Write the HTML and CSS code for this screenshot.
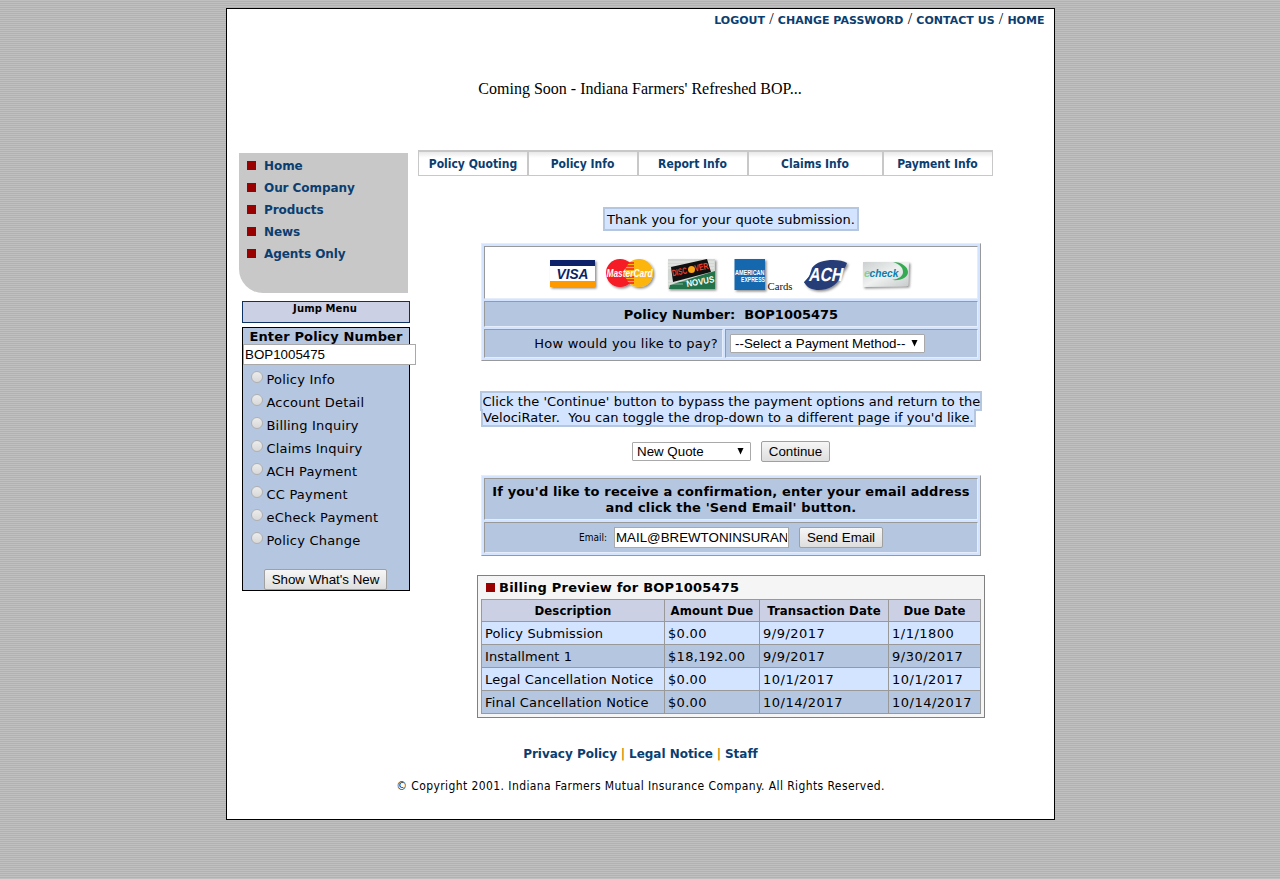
FILE: index.html
```html
<!DOCTYPE html>
<html lang="en">
<head>
<meta charset="utf-8">
<title>Indiana Farmers - Quote Submission</title>
<link rel="stylesheet" href="styles.css">
</head>
<body>
<div class="page">
  <div class="top-links"><a>LOGOUT</a><i>/</i><a>CHANGE PASSWORD</a><i>/</i><a>CONTACT US</a><i>/</i><a>HOME</a></div>
  <div class="banner">Coming Soon - Indiana Farmers' Refreshed BOP...</div>
  <div class="columns">
    <aside class="sidebar">
      <nav class="side-menu">
        <a><span>Home</span></a><a><span>Our Company</span></a><a><span>Products</span></a><a><span>News</span></a><a><span>Agents Only</span></a>
      </nav>
      <div class="jump">Jump Menu</div>
      <div class="policy-panel">
        <div class="panel-title">Enter Policy Number</div>
        <input class="policy-input" value="BOP1005475">
        <div class="radios">
          <label><input type="radio" name="p">Policy Info</label>
          <label><input type="radio" name="p">Account Detail</label>
          <label><input type="radio" name="p">Billing Inquiry</label>
          <label><input type="radio" name="p">Claims Inquiry</label>
          <label><input type="radio" name="p">ACH Payment</label>
          <label><input type="radio" name="p">CC Payment</label>
          <label><input type="radio" name="p">eCheck Payment</label>
          <label><input type="radio" name="p">Policy Change</label>
        </div>
        <button class="btn news-btn">Show What's New</button>
      </div>
    </aside>
    <main class="main">
      <nav class="tabs"><a>Policy Quoting</a><a>Policy Info</a><a>Report Info</a><a>Claims Info</a><a>Payment Info</a></nav>
      <div class="content">
        <div class="thanks">Thank you for your quote submission.</div>
        <section class="grid-box pay-box">
          <div class="cell logos">
            <svg width="370" height="42" viewBox="545 253 370 42">
              <defs>
                <filter id="sh" x="-20%" y="-20%" width="150%" height="150%"><feDropShadow dx="1.5" dy="1.5" stdDeviation="1" flood-opacity=".45"/></filter>
                <linearGradient id="ec" x1="0" y1="0" x2="1" y2="1"><stop offset="0" stop-color="#ccd0d0"/><stop offset=".5" stop-color="#eef1f0"/><stop offset="1" stop-color="#c7cbcb"/></linearGradient>
              </defs>
              <g filter="url(#sh)">
                <path fill="#fff" d="M550 260h45v27h-45z"/>
                <path fill="#0c2368" d="M550 260h45v6h-45z"/><path fill="#f90" d="M550 281h45v6h-45z"/>
              </g>
              <text x="556.5" y="278.5" textLength="32" lengthAdjust="spacingAndGlyphs" class="logo visa">VISA</text>
              <g filter="url(#sh)"><circle cx="620" cy="273" r="14" fill="#f51a25"/><circle cx="639" cy="273" r="14" fill="#fcb50f"/></g>
              <path stroke="#f51a25" stroke-width="1.5" d="M627 263h7M626 266h8M626 269h8M626 277h8M626 280h8M627 283h7"/>
              <text x="606.5" y="277" textLength="46" lengthAdjust="spacingAndGlyphs" class="logo mc">MasterCard</text>
              <g filter="url(#sh)"><path fill="#d3d7d3" d="M668 259h47v30h-47z"/><path fill="#247348" d="M669 289l1-4 45-14v18z"/></g>
              <path stroke="#fff" stroke-width=".7" opacity=".7" d="M668 262h46M668 265h46M668 268h46M668 281h20M668 284h15"/>
              <path fill="#101010" d="M671 267l36-8 4 13-38 10z"/>
              <g transform="rotate(-12 672 278)"><text x="673" y="276.500" textLength="15" lengthAdjust="spacingAndGlyphs" class="logo disc">DISC</text><text x="696" y="276.500" textLength="14" lengthAdjust="spacingAndGlyphs" class="logo disc">VER</text></g>
              <circle cx="691.500" cy="269.500" r="3.500" fill="#f9a51a"/>
              <g transform="rotate(-10 687 287)"><text x="687" y="287" textLength="28" lengthAdjust="spacingAndGlyphs" class="logo novus">NOVUS</text></g>
              <g filter="url(#sh)"><path fill="#1767ae" d="M734.5 259H765v31h-30.500z"/></g>
              <text x="735" y="274.5" textLength="29.500" lengthAdjust="spacingAndGlyphs" class="logo amex">AMERICAN</text>
              <text x="741" y="281.500" textLength="24" lengthAdjust="spacingAndGlyphs" class="logo amex">EXPRESS</text>
              <text x="767.500" y="289.500" textLength="25" lengthAdjust="spacingAndGlyphs" class="logo cards">Cards</text>
              <g filter="url(#sh)" fill="#273e78">
                <path d="M812 268c4-6 13-8 21-8 6 0 11 1 14 3-1 3-2 5-4 7l-3 8c-4 8-12 12-21 12-7 0-12-2-15-8l5-5z"/>
                <path d="M804 283l12-16h5l-1 16z"/>
              </g>
              <g transform="skewX(-12)"><text x="868" y="281.500" textLength="34" lengthAdjust="spacingAndGlyphs" class="logo ach">ACH</text></g>
              <g filter="url(#sh)"><path fill="url(#ec)" d="M863 262h46l-1 24-45 1z"/></g>
              <path fill="#35aa52" d="M893 262c9 0 15 5 15 10s-6 9-16 8c7-1 11-4 11-8 0-5-4-8-10-10z"/>
              <text x="864" y="276.500" class="logo ech">e</text>
              <text x="869.500" y="276.500" textLength="29" lengthAdjust="spacingAndGlyphs" class="logo check">check</text>
            </svg>
          </div>
          <div class="cell pol-num"><b>Policy Number:&nbsp; BOP1005475</b></div>
          <div class="pay-row">
            <div class="cell question">How would you like to pay?</div>
            <div class="cell answer"><div class="select pay-select"><span>--Select a Payment Method--</span><svg width="7" height="7"><path d="M.5 0h6l-3 6.500z"/></svg></div></div>
          </div>
        </section>
        <div class="note"><span class="note-a">Click the 'Continue' button to bypass the payment options and return to the</span><span class="note-b">VelociRater.&nbsp; You can toggle the drop-down to a different page if you'd like.</span></div>
        <div class="continue-row"><div class="select quote-select"><span>New Quote</span><svg width="7" height="7"><path d="M.5 0h6l-3 6.500z"/></svg></div><button class="btn continue">Continue</button></div>
        <section class="grid-box email-box">
          <div class="cell email-head"><b>If you'd like to receive a confirmation, enter your email address</b><b>and click the 'Send Email' button.</b></div>
          <div class="cell email-row"><span>Email:</span><input value="MAIL@BREWTONINSURANCE.COM"><button class="btn send">Send Email</button></div>
        </section>
        <section class="billing">
          <h2><span>Billing Preview for BOP1005475</span></h2>
          <table>
            <colgroup><col class="c1"><col class="c2"><col class="c3"><col class="c4"></colgroup>
            <tr><th>Description</th><th>Amount Due</th><th>Transaction Date</th><th>Due Date</th></tr>
            <tr><td>Policy Submission</td><td class="num">$0.00</td><td class="num">9/9/2017</td><td class="num">1/1/1800</td></tr>
            <tr class="alt"><td>Installment 1</td><td class="num">$18,192.00</td><td class="num">9/9/2017</td><td class="num">9/30/2017</td></tr>
            <tr><td>Legal Cancellation Notice</td><td class="num">$0.00</td><td class="num">10/1/2017</td><td class="num">10/1/2017</td></tr>
            <tr class="alt"><td>Final Cancellation Notice</td><td class="num">$0.00</td><td class="num">10/14/2017</td><td class="num">10/14/2017</td></tr>
          </table>
        </section>
      </div>
    </main>
  </div>
  <footer>
    <div class="foot-links"><a>Privacy Policy</a> <i>|</i> <a>Legal Notice</a> <i>|</i> <a>Staff</a></div>
    <div class="copyright">© Copyright 2001. Indiana Farmers Mutual Insurance Company. All Rights Reserved.</div>
  </footer>
</div>
</body>
</html>
```
FILE: styles.css
```css
* { box-sizing: border-box; }
html { height: 100%; }
body {
  margin: 0; padding: 8px 0 0 226px; min-height: 100%;
  font: 13px/16px Verdana, "DejaVu Sans", sans-serif; color: #000;
  background: repeating-linear-gradient(#c0c0c0 0 1px, #b2b2b2 1px 2px);
}
a { color: #0b3e70; font-weight: bold; }
i { font-style: normal; }
.page { width: 829px; height: 812px; background: #fff; border: 1px solid #000; overflow: hidden; }
.top-links { height: 22px; padding: 1px 9.500px 0 0; display: flex; justify-content: flex-end; align-items: baseline; font-size: 11px; line-height: 18px; letter-spacing: .02px; }
.top-links i { width: 12.800px; text-align: center; font: 16px "Liberation Serif", serif; }
.banner { height: 119px; padding: 49px 1px 0 0; text-align: center; font: 16px/18px "Liberation Serif", serif; }
.columns { display: flex; height: 585px; }
.sidebar { width: 191px; padding: 3px 0 0 12px; }
.side-menu { width: 169px; height: 140px; padding: 1px 0 0 8px; background: #c8c8c8; border-bottom-left-radius: 24px; font-size: 12px; line-height: 18px; }
.side-menu a { display: flex; align-items: center; gap: 8px; height: 22px; }
.side-menu a span { padding-top: 2px; letter-spacing: -.06px; }
.side-menu a::before { content: ""; width: 9px; height: 9px; background: #900; }
.jump { width: 168px; height: 22px; margin: 8px 0 4px 3px; padding-right: 2px; border: 1px solid #0d3261; background: #ccd0e4; text-align: center; font-weight: bold; font-size: 10px; line-height: 14px; letter-spacing: .1px; }
.policy-panel { width: 168px; height: 264px; margin-left: 3px; border: 1px solid #000; background: #b5c6e0; display: flex; flex-direction: column; }
.panel-title { text-align: center; font-weight: bold; white-space: nowrap; height: 16px; line-height: 17px; letter-spacing: .15px; }
input { font: 13.333px "Liberation Sans", sans-serif; border: 1px solid #a9a9a9; border-radius: 0; padding: 1px; margin: 0; color: #000; background: #fff; }
.policy-input { width: 173px; height: 21px; }
.radios { padding: 4px 0 0 8px; height: 204px; letter-spacing: .2px; }
.radios label { display: flex; height: 23px; gap: 3.500px; line-height: 21px; }
.radios input { appearance: none; width: 12px; height: 12px; margin: 2px 0 0; border: 1px solid #b0b0b0; border-radius: 50%; background: linear-gradient(#ececec, #d8d8d8); }
.btn { font: 13.333px "Liberation Sans", sans-serif; color: #000; height: 21px; padding: 0; white-space: nowrap; border: 1px solid #a0a0a0; border-radius: 2px; background: linear-gradient(#f6f6f6, #dedede); }
.news-btn { width: 123px; margin-left: 21px; flex: none; }
.main { width: 575px; }
.tabs { display: grid; grid-template-columns: 109px 110px 110px 135px 110px; height: 26px; border: solid #c8c8c8; border-width: 2px 1px 1px 0; background: linear-gradient(#e8e8e8, #fff 6px); }
.tabs a { border-left: 2px solid #c8c8c8; padding-right: 1px; text-align: center; font: bold 12px/24px Tahoma, "DejaVu Sans Condensed", sans-serif; }
.tabs a:first-child { border-left-width: 1px; padding: 0; }
.content { padding: 31px 0 0 59px; display: flex; flex-direction: column; align-items: flex-start; }
.thanks { height: 24px; width: 256px; margin-left: 126px; border: 2px solid #b5c6e0; background: #d2e4ff; text-align: center; line-height: 21px; white-space: nowrap; letter-spacing: .05px; }
.grid-box { width: 500px; margin-left: 4px; padding: 2px; background: #d2e4ff; border: 1px solid; border-color: #e4edf9 #999 #999 #e4edf9; display: flex; flex-direction: column; gap: 2px; }
.cell { background: #b5c6e0; border: 1px solid; border-color: #999 #e4edf9 #e4edf9 #999; }
.pay-box { margin-top: 12px; height: 118px; }
.logos { height: 53px; background: #fff; padding: 6px 0 0 60px; }
.logos svg { display: block; }
.pol-num { height: 26px; text-align: center; line-height: 25px; }
.pay-row { display: flex; gap: 2px; height: 29px; }
.question { width: 239px; text-align: right; padding-right: 4px; line-height: 27px; white-space: nowrap; letter-spacing: .23px; }
.answer { flex: 1; padding: 4px; }
.select { display: flex; align-items: center; justify-content: space-between; height: 19px; padding: 0 6px 0 4px; border: 1px solid #a9a9a9; border-radius: 1px; background: #fff; font: 13.333px/17px "Liberation Sans", sans-serif; white-space: nowrap; }
.pay-select { width: 195px; }
.note { margin: 30px 0 0 3px; display: flex; flex-direction: column; align-items: flex-start; white-space: nowrap; }
.note span { height: 20px; border: 2px solid #b5c6e0; background: #d2e4ff; line-height: 17px; letter-spacing: .04px; }
.note .note-a { width: 502px; padding-left: .500px; }
.note .note-b { width: 495px; height: 18px; margin: -2px 0 0 1px; border-top: 0; letter-spacing: .05px; }
.continue-row { margin: 14px 0 0 155px; display: flex; align-items: center; gap: 10px; }
.quote-select { width: 119px; }
.continue { width: 69px; }
.email-box { margin-top: 13px; height: 81px; }
.email-head { height: 42px; padding-top: 5px; display: flex; flex-direction: column; align-items: center; white-space: nowrap; letter-spacing: .14px; }
.email-row { height: 31px; padding: 4px 0 0 94px; display: flex; font: 10px/22px Tahoma, "DejaVu Sans Condensed", sans-serif; }
.email-row span { width: 35px; }
.email-row input { width: 175px; height: 21px; margin-right: 10px; }
.send { width: 84px; }
.billing { margin-top: 19px; width: 508px; height: 143px; padding: 0 3px; border: 1px solid #808080; background: #f5f5f5; }
.billing h2 { margin: 0; height: 23px; padding-left: 5px; display: flex; align-items: center; gap: 4px; font-size: 13px; letter-spacing: .24px; }
.billing h2::before { content: ""; width: 9px; height: 9px; background: #900; }
table { width: 499px; border-collapse: collapse; table-layout: fixed; }
.c1 { width: 183px; } .c2 { width: 95px; } .c3 { width: 129px; } .c4 { width: 92px; }
th, td { height: 23px; padding: 1px 0 0 3px; border: 1px solid #999; text-align: left; background: #d2e4ff; white-space: nowrap; letter-spacing: .13px; }
th { height: 22px; padding: 0; text-align: center; background: #ccd0e4; font: bold 13px/16px Tahoma, "DejaVu Sans Condensed", sans-serif; }
.num { letter-spacing: .5px; }
td:nth-child(2) { letter-spacing: .3px; }
.alt td { background: #b5c6e0; }
footer { text-align: center; }
.foot-links { padding-top: 11px; height: 43px; font-size: 12px; }
.foot-links a { letter-spacing: -.02px; }
.foot-links i { color: #c98a00; font-weight: bold; }
.copyright { font: 12px/16px Tahoma, "DejaVu Sans Condensed", sans-serif; letter-spacing: .41px; }
.logo { font-family: "Liberation Sans", sans-serif; font-weight: bold; }
.visa { font-size: 14px; font-style: italic; fill: #0c2368; }
.mc { font-size: 10px; font-style: italic; fill: #fff; }
.disc { font-size: 9px; fill: #f0412f; }
.novus { font-size: 9px; fill: #fff; }
.amex { font-size: 6.500px; fill: #fff; }
.cards { font-family: "Liberation Serif", serif; font-size: 11px; font-weight: normal; fill: #111; }
.ach { font-size: 19px; fill: #fff; }
.ech, .check { font-size: 11px; font-style: italic; }
.ech { fill: #86cf95; }
.check { fill: #0a7fae; }
```
